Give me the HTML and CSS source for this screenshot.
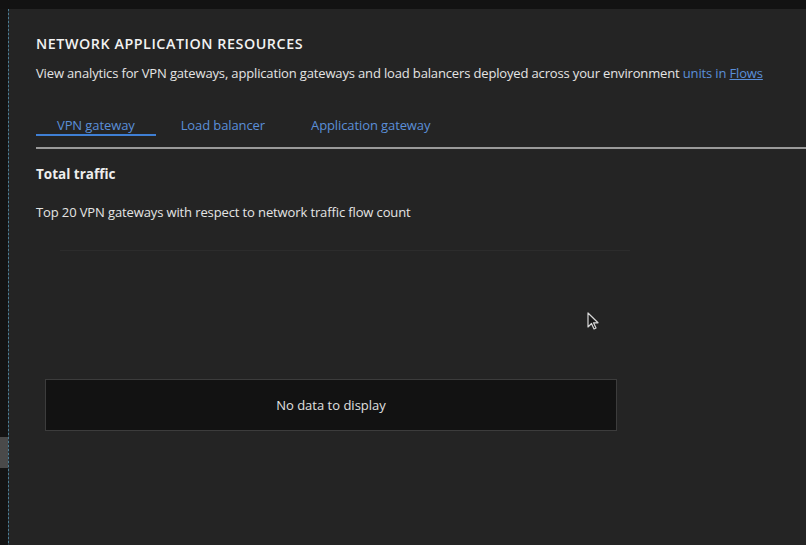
FILE: index.html
```html
<!DOCTYPE html>
<html>
<head>
<meta charset="utf-8">
<link rel="stylesheet" href="styles.css">
</head>
<body>
<div class="topbar"></div>
<div class="main">
  <div class="rail"><div class="rail-tab"></div></div>
  <div class="edge"></div>
  <div class="panel">
    <h1 class="title">NETWORK APPLICATION RESOURCES</h1>
    <p class="desc">View analytics for VPN gateways, application gateways and load balancers deployed across your environment <span class="link">units in <u>Flows</u></span></p>
    <div class="tabs">
      <div class="tab active">VPN gateway</div>
      <div class="tab">Load balancer</div>
      <div class="tab">Application gateway</div>
    </div>
    <div class="tabline"></div>
    <h2 class="section">Total traffic</h2>
    <p class="sub">Top 20 VPN gateways with respect to network traffic flow count</p>
    <div class="faint"></div>
    <div class="nodata">No data to display</div>
  </div>
</div>
<svg class="cursor" width="14" height="20" viewBox="0 0 14 20"><path d="M1 1 L1 15 L4.5 11.5 L7 17 L9 16 L6.5 10.8 L11 10.8 Z" fill="#1a1a1a" stroke="#d8d8d8" stroke-width="1.2" stroke-linejoin="round"/></svg>
</body>
</html>
```
FILE: styles.css
```css
html, body { margin: 0; padding: 0; }
body {
  width: 806px; height: 545px; overflow: hidden;
  background: #242424;
  font-family: "Open Sans", "Noto Sans", sans-serif;
  color: #e8e8e8;
  position: relative;
}
.topbar { height: 9px; background: #121212; }
.main { display: flex; height: 536px; }
.rail { width: 8px; background: #141414; display: flex; flex-direction: column; }
.rail-tab { margin-top: 428px; height: 31px; background: #4a4a4a; }
.edge { width: 1px; background: repeating-linear-gradient(#4b7d93 0 2px, #2a3a44 2px 4px); }
.panel { flex: 1; padding: 0 0 0 27px; background: #242424; }
.title {
  margin: 27px 0 0; font-size: 14.3px; font-weight: 600; letter-spacing: 0.55px;
  color: #f2f2f2; line-height: 16px;
}
.desc { margin: 13px 0 0; font-size: 13px; line-height: 16px; color: #e4e4e4; letter-spacing: -0.15px; }
.link { color: #5b8fd8; }
.tabs { display: flex; margin-top: 36px; gap: 4px; }
.tab {
  font-size: 13px; color: #5b8fd8; line-height: 16px; letter-spacing: -0.1px;
  padding: 0 21px 1px; border-bottom: 2px solid transparent;
}
.tab.active { border-bottom-color: #3f7fd4; }
.tabline { height: 2px; background: #9a9a9a; margin-top: 11px; }
.section { margin: 17px 0 0; font-size: 13.5px; font-weight: 700; line-height: 16px; color: #eeeeee; }
.sub { margin: 22px 0 0; font-size: 13px; line-height: 16px; color: #e4e4e4; letter-spacing: -0.12px; }
.faint { margin: 30px 0 0 24px; width: 570px; height: 1px; background: #2c2c2c; }
.nodata {
  margin: 128px 0 0 9px; width: 570px; height: 50px;
  background: #121212; border: 1px solid #3c3c3c;
  display: flex; align-items: center; justify-content: center;
  font-size: 13px; color: #e0e0e0;
}
.cursor { position: absolute; left: 587px; top: 312px; }
```
